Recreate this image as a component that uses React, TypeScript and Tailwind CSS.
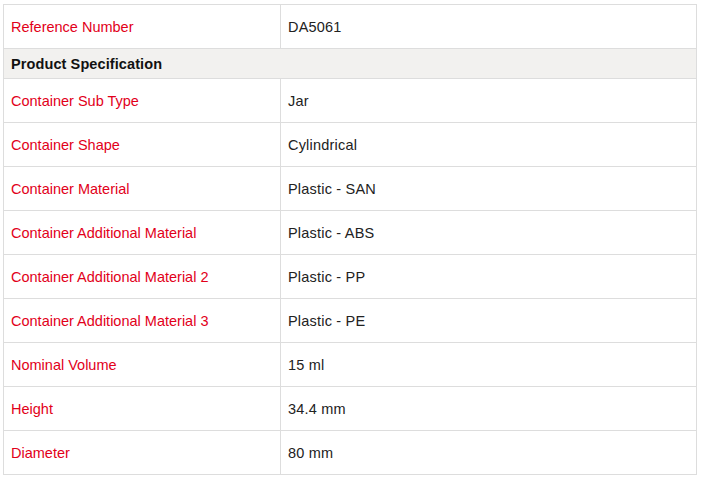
const ROWS_TOP = [{ label: "Reference Number", value: "DA5061" }];

const SPEC_ROWS = [
  { label: "Container Sub Type", value: "Jar" },
  { label: "Container Shape", value: "Cylindrical" },
  { label: "Container Material", value: "Plastic - SAN" },
  { label: "Container Additional Material", value: "Plastic - ABS" },
  { label: "Container Additional Material 2", value: "Plastic - PP" },
  { label: "Container Additional Material 3", value: "Plastic - PE" },
  { label: "Nominal Volume", value: "15 ml" },
  { label: "Height", value: "34.4 mm" },
  { label: "Diameter", value: "80 mm" },
];

function Row({ label, value }: { label: string; value: string }) {
  return (
    <tr className="h-[44px]">
      <td className="w-[277px] border border-[#dddddd] px-[7px] pt-[2px] align-middle text-[#e2001a]">{label}</td>
      <td className="border border-[#dddddd] px-[7px] pt-[2px] align-middle tracking-[0.2px] text-[#222222]">{value}</td>
    </tr>
  );
}

export default function App() {
  return (
    <div className="min-h-[485px] bg-white pl-[3px] pt-[4px] font-['Liberation_Sans',Arial,sans-serif] text-[14.5px]">
      <table className="w-[694px] table-fixed border-collapse">
        <tbody>
          {ROWS_TOP.map((r) => (
            <Row key={r.label} {...r} />
          ))}
          <tr className="h-[30px] bg-[#f2f1ef]">
            <td colSpan={2} className="border border-[#dddddd] px-[7px] pt-[2px] align-middle font-bold tracking-[0.1px] text-[#111111]">
              Product Specification
            </td>
          </tr>
          {SPEC_ROWS.map((r) => (
            <Row key={r.label} {...r} />
          ))}
        </tbody>
      </table>
    </div>
  );
}
